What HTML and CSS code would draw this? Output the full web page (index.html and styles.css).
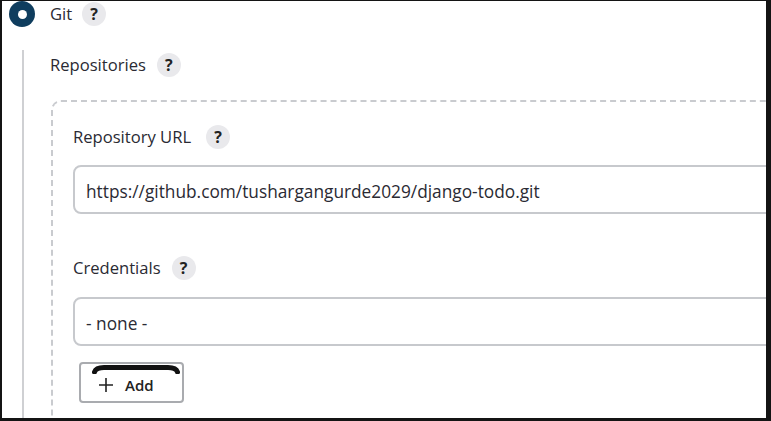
FILE: index.html
```html
<!DOCTYPE html>
<html>
<head>
<meta charset="utf-8">
<link rel="stylesheet" href="styles.css">
</head>
<body>
<div class="frame">
  <div class="radio-row">
    <span class="radio"><span class="radio-dot"></span></span>
    <span class="label label-git">Git</span>
    <span class="help">?</span>
  </div>
  <div class="nested">
    <div class="title-row">
      <span class="label">Repositories</span>
      <span class="help help-repos">?</span>
    </div>
    <div class="repeated">
      <div class="title-row row-url">
        <span class="label">Repository URL</span>
        <span class="help help-url">?</span>
      </div>
      <div class="input">https://github.com/tushargangurde2029/django-todo.git</div>
      <div class="title-row row-cred">
        <span class="label">Credentials</span>
        <span class="help help-cred">?</span>
      </div>
      <div class="input select">- none -</div>
      <button class="add-btn">
        <svg class="smudge" width="88" height="10" viewBox="0 0 88 10">
          <path d="M2.5 8 Q4 3.5 12 3.5 L76 3.5 Q84 3.5 85.5 8" fill="none" stroke="#111" stroke-width="5" stroke-linecap="round"/>
        </svg>
        <svg class="plus" width="16" height="16" viewBox="0 0 16 16">
          <path d="M8 1 V15 M1 8 H15" stroke="#222" stroke-width="1.6" fill="none"/>
        </svg>
        <span class="add-text">Add</span>
      </button>
    </div>
  </div>
</div>
</body>
</html>
```
FILE: styles.css
```css
* { box-sizing: border-box; }
html, body { margin: 0; padding: 0; background: #111; }
.frame {
  width: 771px;
  height: 421px;
  background: #fff;
  border-style: solid;
  border-color: #141414;
  border-width: 1px 5px 3px 2px;
  overflow: hidden;
  font-family: "Open Sans", "Noto Sans", sans-serif;
  color: #2a2a33;
}
.radio-row {
  display: flex;
  align-items: center;
  height: 26px;
  padding-left: 7px;
}
.radio {
  width: 26px;
  height: 26px;
  border-radius: 50%;
  background: #0f3d5e;
  display: flex;
  align-items: center;
  justify-content: center;
  flex: none;
}
.radio-dot {
  width: 9px;
  height: 9px;
  border-radius: 50%;
  background: #fff;
}
.label {
  font-size: 16.6px;
  line-height: 24px;
  white-space: nowrap;
}
.label-git { margin-left: 15px; }
.help {
  width: 24px;
  height: 24px;
  border-radius: 50%;
  background: #e9e9ec;
  color: #222;
  font-weight: 700;
  font-size: 16px;
  display: flex;
  align-items: center;
  justify-content: center;
  flex: none;
  margin-left: 10px;
}
.help-repos { margin-left: 11px; }
.help-url { margin-left: 15px; }
.help-cred { margin-left: 11px; }
.nested {
  margin-left: 20px;
  margin-top: 23px;
  border-left: 2px solid #cfd0d3;
  padding-left: 26px;
  padding-top: 3px;
  height: 400px;
}
.title-row {
  display: flex;
  align-items: center;
  height: 24px;
}
.repeated {
  margin-left: 1px;
  margin-top: 23px;
  width: 800px;
  border: 2px dashed #c9cbcf;
  border-radius: 10px;
  padding: 23px 0 0 20px;
  height: 400px;
}
.input {
  margin-top: 16px;
  height: 49px;
  width: 760px;
  border: 2px solid #c7c9cd;
  border-radius: 8px;
  padding: 3px 0 0 11px;
  display: flex;
  align-items: center;
  font-size: 17.3px;
  white-space: nowrap;
}
.row-cred { margin-top: 42px; }
.select { margin-top: 17px; }
.add-btn {
  position: relative;
  margin-top: 16px;
  margin-left: 6px;
  width: 105px;
  height: 41px;
  border: 2px solid #a9abaf;
  border-radius: 4px;
  background: #fff;
  display: flex;
  align-items: center;
  padding: 4px 0 0 17px;
  font-family: "Open Sans", "Noto Sans", sans-serif;
  color: #222;
}
.smudge {
  position: absolute;
  left: 11px;
  top: 0;
}
.plus { flex: none; }
.add-text {
  font-size: 15px;
  font-weight: 600;
  margin-left: 11px;
}
```
